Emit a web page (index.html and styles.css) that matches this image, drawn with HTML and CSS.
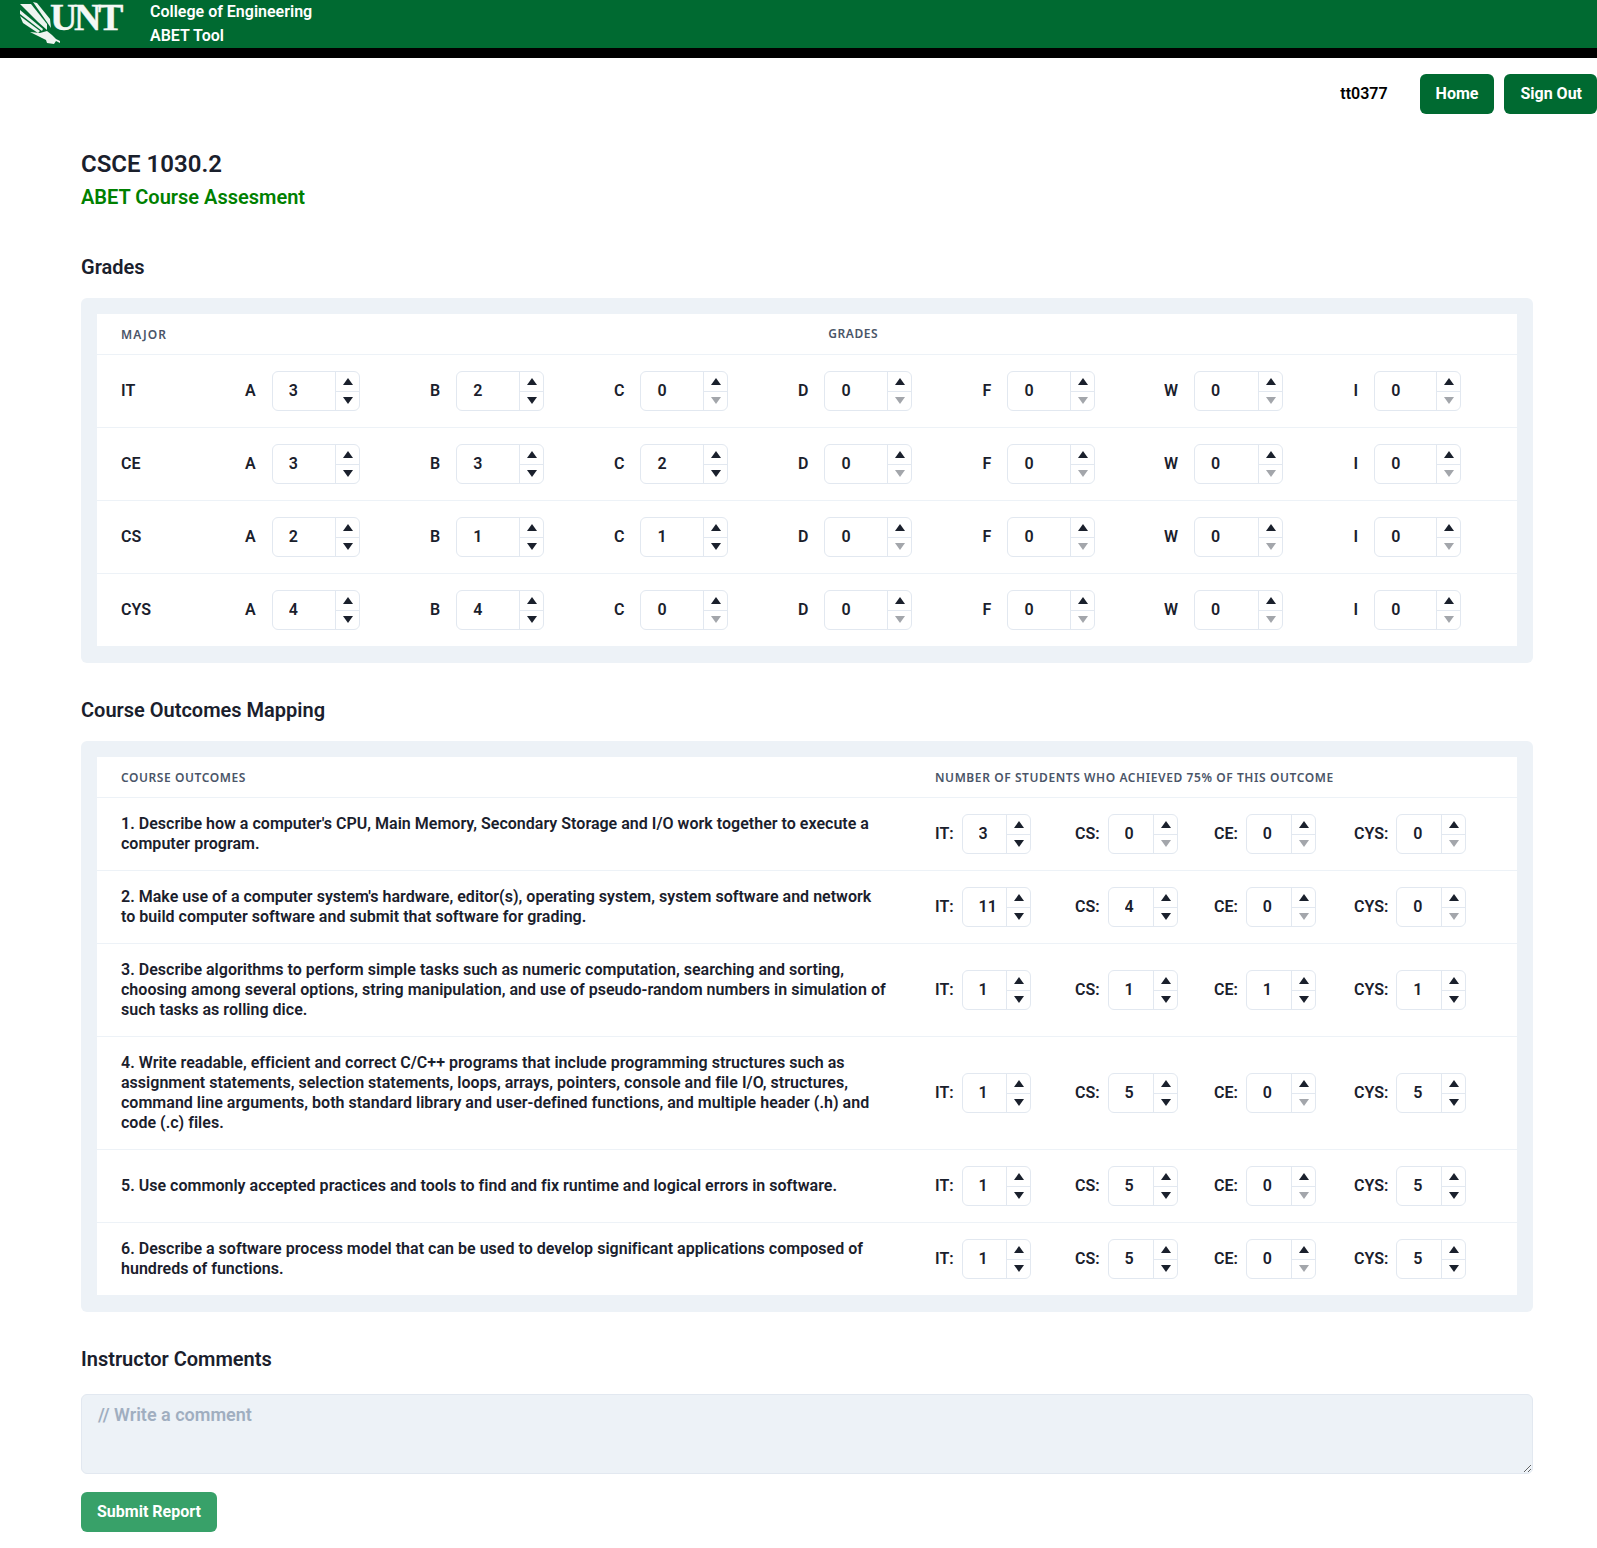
FILE: index.html
```html
<!DOCTYPE html>
<html>

<head>
    <meta charset="UTF-8">
    <title>ABET Tool</title>
    <link rel="stylesheet" href="styles.css">
</head>

<body>
    <header class="topbar">
        <svg class="logo" width="130" height="48" viewBox="0 0 130 48">
            <g fill="#eef4f0">
                <polygon points="33,2 37,3 50,19 51,28" />
                <polygon points="20,4 31,4 47,24 47,30 38,22" />
                <polygon points="20,10 43,29 42,31 20,14" />
                <polygon points="20,16 40,31 38,33 23,23" />
                <polygon points="30,32 40,33 47,31 52,35 56,39 60,41 60,43 56,41 54,44 47,43 46,40 40,37" />
            </g>
            <text class="logo-text" x="50" y="30" fill="#f4f8f5">UNT</text>
        </svg>
        <div class="topbar-title">
            <div>College of Engineering</div>
            <div>ABET Tool</div>
        </div>
    </header>

    <nav class="usernav">
        <span class="username">tt0377</span>
        <button class="navbtn">Home</button>
        <button class="navbtn">Sign Out</button>
    </nav>

    <main class="content">
        <h1 class="course">CSCE 1030.2</h1>
        <h2 class="subtitle">ABET Course Assesment</h2>

        <h2 class="section grades-title">Grades</h2>
        <div class="panel">
            <div class="sheet">
                <div class="grades-head">
                    <span class="th major-th">Major</span>
                    <span class="th grades-th">Grades</span>
                </div>

                <div class="grades-row">
                    <span class="major">IT</span>
                    <div class="cell"><label>A</label><div class="num"><input value="3"><div class="step"><i class="up"></i><i class="down"></i></div></div></div>
                    <div class="cell"><label>B</label><div class="num"><input value="2"><div class="step"><i class="up"></i><i class="down"></i></div></div></div>
                    <div class="cell"><label>C</label><div class="num"><input value="0"><div class="step"><i class="up"></i><i class="down off"></i></div></div></div>
                    <div class="cell"><label>D</label><div class="num"><input value="0"><div class="step"><i class="up"></i><i class="down off"></i></div></div></div>
                    <div class="cell"><label>F</label><div class="num"><input value="0"><div class="step"><i class="up"></i><i class="down off"></i></div></div></div>
                    <div class="cell"><label>W</label><div class="num"><input value="0"><div class="step"><i class="up"></i><i class="down off"></i></div></div></div>
                    <div class="cell"><label>I</label><div class="num"><input value="0"><div class="step"><i class="up"></i><i class="down off"></i></div></div></div>
                </div>

                <div class="grades-row">
                    <span class="major">CE</span>
                    <div class="cell"><label>A</label><div class="num"><input value="3"><div class="step"><i class="up"></i><i class="down"></i></div></div></div>
                    <div class="cell"><label>B</label><div class="num"><input value="3"><div class="step"><i class="up"></i><i class="down"></i></div></div></div>
                    <div class="cell"><label>C</label><div class="num"><input value="2"><div class="step"><i class="up"></i><i class="down"></i></div></div></div>
                    <div class="cell"><label>D</label><div class="num"><input value="0"><div class="step"><i class="up"></i><i class="down off"></i></div></div></div>
                    <div class="cell"><label>F</label><div class="num"><input value="0"><div class="step"><i class="up"></i><i class="down off"></i></div></div></div>
                    <div class="cell"><label>W</label><div class="num"><input value="0"><div class="step"><i class="up"></i><i class="down off"></i></div></div></div>
                    <div class="cell"><label>I</label><div class="num"><input value="0"><div class="step"><i class="up"></i><i class="down off"></i></div></div></div>
                </div>

                <div class="grades-row">
                    <span class="major">CS</span>
                    <div class="cell"><label>A</label><div class="num"><input value="2"><div class="step"><i class="up"></i><i class="down"></i></div></div></div>
                    <div class="cell"><label>B</label><div class="num"><input value="1"><div class="step"><i class="up"></i><i class="down"></i></div></div></div>
                    <div class="cell"><label>C</label><div class="num"><input value="1"><div class="step"><i class="up"></i><i class="down"></i></div></div></div>
                    <div class="cell"><label>D</label><div class="num"><input value="0"><div class="step"><i class="up"></i><i class="down off"></i></div></div></div>
                    <div class="cell"><label>F</label><div class="num"><input value="0"><div class="step"><i class="up"></i><i class="down off"></i></div></div></div>
                    <div class="cell"><label>W</label><div class="num"><input value="0"><div class="step"><i class="up"></i><i class="down off"></i></div></div></div>
                    <div class="cell"><label>I</label><div class="num"><input value="0"><div class="step"><i class="up"></i><i class="down off"></i></div></div></div>
                </div>

                <div class="grades-row">
                    <span class="major">CYS</span>
                    <div class="cell"><label>A</label><div class="num"><input value="4"><div class="step"><i class="up"></i><i class="down"></i></div></div></div>
                    <div class="cell"><label>B</label><div class="num"><input value="4"><div class="step"><i class="up"></i><i class="down"></i></div></div></div>
                    <div class="cell"><label>C</label><div class="num"><input value="0"><div class="step"><i class="up"></i><i class="down off"></i></div></div></div>
                    <div class="cell"><label>D</label><div class="num"><input value="0"><div class="step"><i class="up"></i><i class="down off"></i></div></div></div>
                    <div class="cell"><label>F</label><div class="num"><input value="0"><div class="step"><i class="up"></i><i class="down off"></i></div></div></div>
                    <div class="cell"><label>W</label><div class="num"><input value="0"><div class="step"><i class="up"></i><i class="down off"></i></div></div></div>
                    <div class="cell"><label>I</label><div class="num"><input value="0"><div class="step"><i class="up"></i><i class="down off"></i></div></div></div>
                </div>
            </div>
        </div>

        <h2 class="section">Course Outcomes Mapping</h2>
        <div class="panel">
            <div class="sheet">
                <div class="outcomes-head">
                    <span class="th outcomes-th">Course Outcomes</span>
                    <span class="th">Number of students who achieved 75% of this outcome</span>
                </div>

                <div class="outcome-row">
                    <p class="outcome">1. Describe how a computer's CPU, Main Memory, Secondary Storage and I/O work together to execute a computer program.</p>
                    <div class="pair"><label>IT:</label><div class="num small"><input value="3"><div class="step"><i class="up"></i><i class="down"></i></div></div></div>
                    <div class="pair"><label>CS:</label><div class="num small"><input value="0"><div class="step"><i class="up"></i><i class="down off"></i></div></div></div>
                    <div class="pair"><label>CE:</label><div class="num small"><input value="0"><div class="step"><i class="up"></i><i class="down off"></i></div></div></div>
                    <div class="pair"><label>CYS:</label><div class="num small"><input value="0"><div class="step"><i class="up"></i><i class="down off"></i></div></div></div>
                </div>

                <div class="outcome-row">
                    <p class="outcome">2. Make use of a computer system's hardware, editor(s), operating system, system software and network to build computer software and submit that software for grading.</p>
                    <div class="pair"><label>IT:</label><div class="num small"><input value="11"><div class="step"><i class="up"></i><i class="down"></i></div></div></div>
                    <div class="pair"><label>CS:</label><div class="num small"><input value="4"><div class="step"><i class="up"></i><i class="down"></i></div></div></div>
                    <div class="pair"><label>CE:</label><div class="num small"><input value="0"><div class="step"><i class="up"></i><i class="down off"></i></div></div></div>
                    <div class="pair"><label>CYS:</label><div class="num small"><input value="0"><div class="step"><i class="up"></i><i class="down off"></i></div></div></div>
                </div>

                <div class="outcome-row">
                    <p class="outcome">3. Describe algorithms to perform simple tasks such as numeric computation, searching and sorting, choosing among several options, string manipulation, and use of pseudo-random numbers in simulation of such tasks as rolling dice.</p>
                    <div class="pair"><label>IT:</label><div class="num small"><input value="1"><div class="step"><i class="up"></i><i class="down"></i></div></div></div>
                    <div class="pair"><label>CS:</label><div class="num small"><input value="1"><div class="step"><i class="up"></i><i class="down"></i></div></div></div>
                    <div class="pair"><label>CE:</label><div class="num small"><input value="1"><div class="step"><i class="up"></i><i class="down"></i></div></div></div>
                    <div class="pair"><label>CYS:</label><div class="num small"><input value="1"><div class="step"><i class="up"></i><i class="down"></i></div></div></div>
                </div>

                <div class="outcome-row">
                    <p class="outcome">4. Write readable, efficient and correct C/C++ programs that include programming structures such as assignment statements, selection statements, loops, arrays, pointers, console and file I/O, structures, command line arguments, both standard library and user-defined functions, and multiple header (.h) and code (.c) files.</p>
                    <div class="pair"><label>IT:</label><div class="num small"><input value="1"><div class="step"><i class="up"></i><i class="down"></i></div></div></div>
                    <div class="pair"><label>CS:</label><div class="num small"><input value="5"><div class="step"><i class="up"></i><i class="down"></i></div></div></div>
                    <div class="pair"><label>CE:</label><div class="num small"><input value="0"><div class="step"><i class="up"></i><i class="down off"></i></div></div></div>
                    <div class="pair"><label>CYS:</label><div class="num small"><input value="5"><div class="step"><i class="up"></i><i class="down"></i></div></div></div>
                </div>

                <div class="outcome-row">
                    <p class="outcome">5. Use commonly accepted practices and tools to find and fix runtime and logical errors in software.</p>
                    <div class="pair"><label>IT:</label><div class="num small"><input value="1"><div class="step"><i class="up"></i><i class="down"></i></div></div></div>
                    <div class="pair"><label>CS:</label><div class="num small"><input value="5"><div class="step"><i class="up"></i><i class="down"></i></div></div></div>
                    <div class="pair"><label>CE:</label><div class="num small"><input value="0"><div class="step"><i class="up"></i><i class="down off"></i></div></div></div>
                    <div class="pair"><label>CYS:</label><div class="num small"><input value="5"><div class="step"><i class="up"></i><i class="down"></i></div></div></div>
                </div>

                <div class="outcome-row">
                    <p class="outcome">6. Describe a software process model that can be used to develop significant applications composed of hundreds of functions.</p>
                    <div class="pair"><label>IT:</label><div class="num small"><input value="1"><div class="step"><i class="up"></i><i class="down"></i></div></div></div>
                    <div class="pair"><label>CS:</label><div class="num small"><input value="5"><div class="step"><i class="up"></i><i class="down"></i></div></div></div>
                    <div class="pair"><label>CE:</label><div class="num small"><input value="0"><div class="step"><i class="up"></i><i class="down off"></i></div></div></div>
                    <div class="pair"><label>CYS:</label><div class="num small"><input value="5"><div class="step"><i class="up"></i><i class="down"></i></div></div></div>
                </div>
            </div>
        </div>

        <h2 class="section comments-title">Instructor Comments</h2>
        <textarea class="comment" placeholder="// Write a comment"></textarea>
        <button class="submit">Submit Report</button>
    </main>
</body>

</html>
```

FILE: styles.css
```css
* {
    margin: 0;
    padding: 0;
    box-sizing: border-box;
}

body {
    font-family: Roboto, "Liberation Sans", sans-serif;
    font-size: 16px;
    font-weight: 600;
    color: #1a202c;
    background: #fff;
}

/* top bar */
.topbar {
    display: flex;
    height: 58px;
    background: #006a31;
    border-bottom: 10px solid #000;
    color: #fff;
}

.logo {
    flex: none;
    margin-right: 20px;
}

.logo-text {
    font-family: "Liberation Serif", serif;
    font-size: 38px;
    font-weight: 700;
    letter-spacing: -3.5px;
    stroke: #f4f8f5;
    stroke-width: 0.4px;
}

.topbar-title {
    line-height: 24px;
}

.usernav {
    display: flex;
    align-items: center;
    justify-content: flex-end;
    gap: 10px;
    padding-top: 16px;
}

.username {
    margin-right: 22px;
    padding-bottom: 2px;
    color: #000;
}

.navbtn,
.submit {
    height: 40px;
    padding: 0 16px 2px;
    border: 0;
    border-radius: 6px;
    background: #006a31;
    color: #fff;
    font-family: inherit;
    font-size: 16px;
    font-weight: 700;
}

.navbtn:last-child {
    padding-right: 15px;
}

/* page */
.content {
    padding: 34px 64px 16px 81px;
}

.course {
    font-size: 24px;
    line-height: 32px;
    font-weight: 600;
}

.subtitle {
    margin-top: 3px;
    font-size: 20px;
    line-height: 28px;
    font-weight: 600;
    color: #008000;
}

.section {
    margin: 33px 0 17px;
    font-size: 20px;
    line-height: 28px;
    font-weight: 600;
}

.grades-title {
    margin-top: 42px;
}

.panel {
    padding: 16px 16px 17px;
    background: #edf2f7;
    border-radius: 6px;
}

.sheet {
    background: #fff;
}

.th {
    font-family: "Noto Sans", sans-serif;
    font-size: 12px;
    font-weight: 600;
    letter-spacing: 0.58px;
    text-transform: uppercase;
    color: #4a5568;
}

/* grades table */
.grades-head,
.outcomes-head {
    display: flex;
    align-items: center;
    height: 41px;
    padding-left: 24px;
    border-bottom: 1px solid #edf2f7;
}

.major-th {
    letter-spacing: 1.1px;
}

.grades-th {
    margin-left: 661px;
    padding-bottom: 2px;
}

.grades-row {
    display: grid;
    grid-template-columns: 148px 185px 184px 184px 184.6px 181.4px 189.6px 1fr;
    align-items: center;
    padding: 16px 0;
    border-bottom: 1px solid #edf2f7;
}

.grades-row:last-child,
.outcome-row:last-child {
    border-bottom: 0;
}

.major {
    padding: 0 0 2px 24px;
}

.cell {
    display: flex;
    align-items: center;
    gap: 16px;
}

.cell label,
.pair label {
    padding-bottom: 2px;
}

/* number stepper */
.num {
    display: flex;
    width: 88px;
    height: 40px;
    border: 1px solid #e2e8f0;
    border-radius: 6px;
}

.cell:nth-child(7) .num {
    width: 89px;
}

.cell:nth-child(8) .num {
    width: 87px;
}

.num.small {
    width: 70px;
}

.pair:nth-child(2) .num.small {
    width: 69px;
}

.num input {
    flex: 1;
    min-width: 0;
    padding: 0 0 2px 16px;
    border: 0;
    outline: 0;
    background: none;
    font-family: inherit;
    font-size: 16px;
    font-weight: 600;
    color: #1a202c;
}

.step {
    display: flex;
    flex-direction: column;
    flex: none;
    width: 24px;
    border-left: 1px solid #e2e8f0;
}

.step i {
    display: block;
    flex: 1;
    position: relative;
}

.step i::after {
    content: "";
    position: absolute;
    left: 7px;
    border-left: 5px solid transparent;
    border-right: 5px solid transparent;
}

.up {
    border-bottom: 1px solid #e2e8f0;
}

.up::after {
    top: 6px;
    border-bottom: 7px solid #1a202c;
}

.down::after {
    top: 5px;
    border-top: 7px solid #1a202c;
}

.down.off::after {
    border-top-color: #a3a6ab;
}

/* outcomes table */
.outcomes-th {
    width: 814px;
}

.outcome-row {
    display: grid;
    grid-template-columns: 838px 140px 139px 140px 1fr;
    align-items: center;
    padding: 16px 0;
    border-bottom: 1px solid #edf2f7;
}

.outcome {
    padding: 0 48px 0 24px;
    line-height: 20px;
    letter-spacing: 0.02px;
}

.pair {
    display: flex;
    align-items: center;
    gap: 8px;
}

/* comments */
.comments-title {
    margin-bottom: 21px;
}

.comment {
    display: block;
    width: 100%;
    height: 80px;
    padding: 8px 16px;
    border: 1px solid #e2e8f0;
    border-radius: 6px;
    background: #edf2f7;
    outline: 0;
    font-family: inherit;
    font-size: 18px;
    font-weight: 600;
    line-height: 24px;
    color: #1a202c;
}

.comment::placeholder {
    color: #a0aec0;
    opacity: 1;
}

.submit {
    display: block;
    margin-top: 18px;
    background: #38a169;
}
```
